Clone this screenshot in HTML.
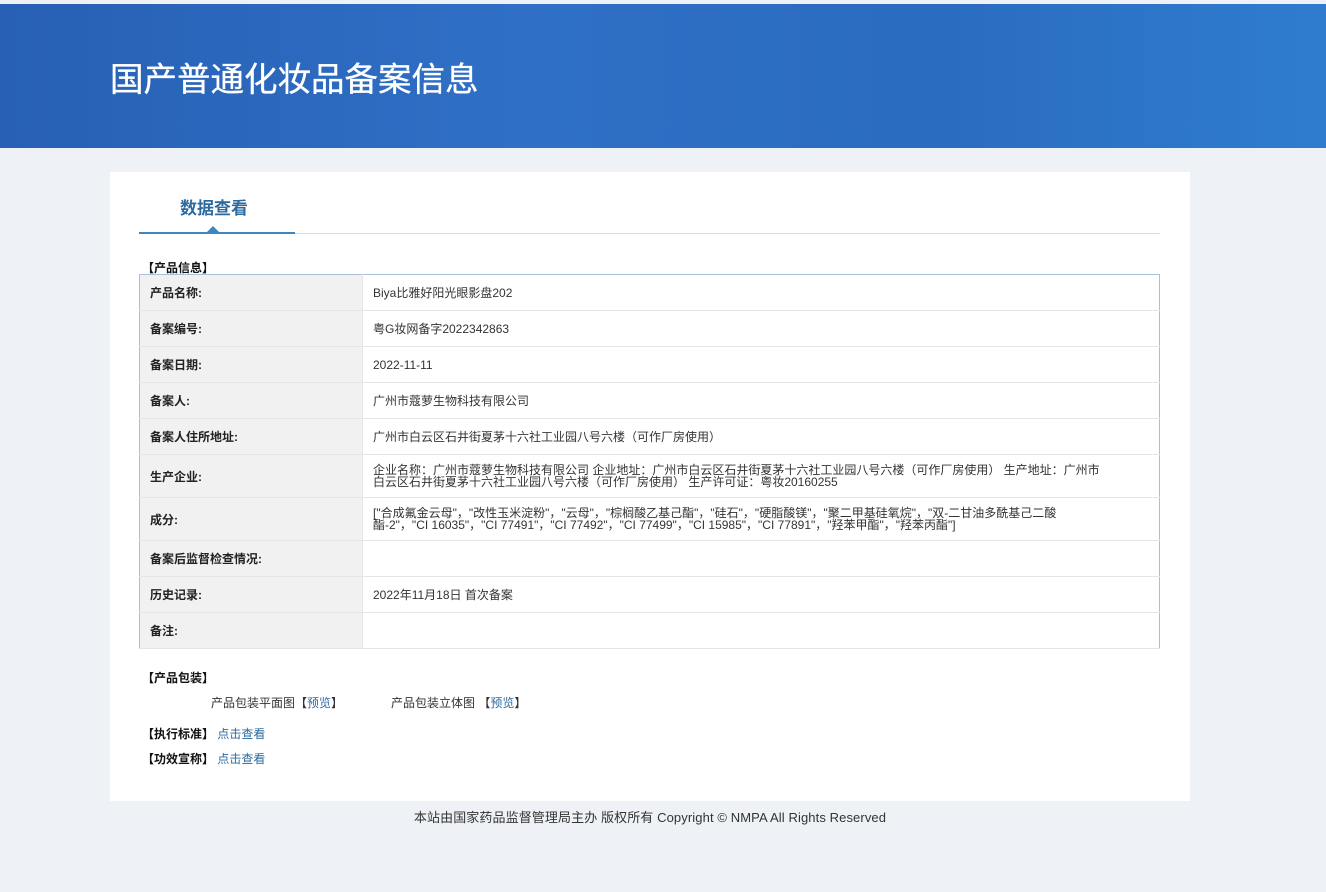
<!DOCTYPE html>
<html><head><meta charset="utf-8"><style>
*{margin:0;padding:0;box-sizing:border-box}
body{width:1326px;height:892px;background:#eef2f6;font-family:"Liberation Sans","Noto Sans CJK SC",sans-serif;position:relative;overflow:hidden;color:#333}
.hd{position:absolute;left:0;top:4px;width:1326px;height:144px;background:linear-gradient(90deg,#2760b4 0%,#2f70c6 40%,#2a6cbf 70%,#2f7ccf 100%)}
.hd h1{position:absolute;left:110px;top:57px;font-size:33.5px;font-weight:normal;color:#fff;line-height:40px;-webkit-text-stroke:0.3px #fff}
.card{position:absolute;left:110px;top:172px;width:1080px;height:629px;background:#fff}
.tab{position:absolute;left:70px;top:22px;font-size:17px;font-weight:bold;color:#2d6aa0}
.line{position:absolute;left:29px;top:61px;width:1021px;height:1px;background:#ddd}
.line2{position:absolute;left:29px;top:60px;width:156px;height:2px;background:#3d86c0}
.tri{position:absolute;left:97px;top:54px;width:0;height:0;border-left:6px solid transparent;border-right:6px solid transparent;border-bottom:6px solid #3d86c0}
.sec{position:absolute;font-size:12px;font-weight:bold;color:#111}
table{position:absolute;left:29px;top:102px;width:1021px;border-collapse:collapse;border:1px solid #a8c0dc;font-size:12px}
td{border-bottom:1px solid #e6e6e6;height:36px;padding:0 10px;vertical-align:middle}
td.l{width:223px;background:#f1f1f1;font-weight:bold;color:#222;border-right:1px solid #e6e6e6}
td.v{line-height:12px;color:#333}
.lk{color:#2d6aa0}
.ft{position:absolute;top:807px;left:-13px;width:1326px;text-align:center;font-size:13px;color:#333;letter-spacing:0.1px}
</style></head><body>
<div class="hd"><h1>国产普通化妆品备案信息</h1></div>
<div class="card">
<div class="tab">数据查看</div>
<div class="line"></div><div class="line2"></div><div class="tri"></div>
<div class="sec" style="left:32px;top:87px">【产品信息】</div>
<table>
<tr><td class="l">产品名称:</td><td class="v">Biya比雅好阳光眼影盘202</td></tr>
<tr><td class="l">备案编号:</td><td class="v">粤G妆网备字2022342863</td></tr>
<tr><td class="l">备案日期:</td><td class="v">2022-11-11</td></tr>
<tr><td class="l">备案人:</td><td class="v">广州市蔻萝生物科技有限公司</td></tr>
<tr><td class="l">备案人住所地址:</td><td class="v">广州市白云区石井街夏茅十六社工业园八号六楼（可作厂房使用）</td></tr>
<tr><td class="l" style="height:43px">生产企业:</td><td class="v">企业名称：广州市蔻萝生物科技有限公司 企业地址：广州市白云区石井街夏茅十六社工业园八号六楼（可作厂房使用） 生产地址：广州市<br>白云区石井街夏茅十六社工业园八号六楼（可作厂房使用） 生产许可证：粤妆20160255</td></tr>
<tr><td class="l" style="height:43px">成分:</td><td class="v">["合成氟金云母"，"改性玉米淀粉"，"云母"，"棕榈酸乙基己酯"，"硅石"，"硬脂酸镁"，"聚二甲基硅氧烷"，"双-二甘油多酰基己二酸<br>酯-2"，"CI 16035"，"CI 77491"，"CI 77492"，"CI 77499"，"CI 15985"，"CI 77891"，"羟苯甲酯"，"羟苯丙酯"]</td></tr>
<tr><td class="l">备案后监督检查情况:</td><td class="v"></td></tr>
<tr><td class="l">历史记录:</td><td class="v">2022年11月18日 首次备案</td></tr>
<tr><td class="l">备注:</td><td class="v"></td></tr>
</table>
<div class="sec" style="left:32px;top:497px">【产品包装】</div>
<div style="position:absolute;left:101px;top:522px;font-size:12px">产品包装平面图【<span class="lk">预览</span>】</div>
<div style="position:absolute;left:281px;top:522px;font-size:12px">产品包装立体图 【<span class="lk">预览</span>】</div>
<div class="sec" style="left:32px;top:553px">【执行标准】 <span class="lk" style="font-weight:normal">点击查看</span></div>
<div class="sec" style="left:32px;top:578px">【功效宣称】 <span class="lk" style="font-weight:normal">点击查看</span></div>
</div>
<div class="ft">本站由国家药品监督管理局主办 版权所有 Copyright © NMPA All Rights Reserved</div>
</body></html>
